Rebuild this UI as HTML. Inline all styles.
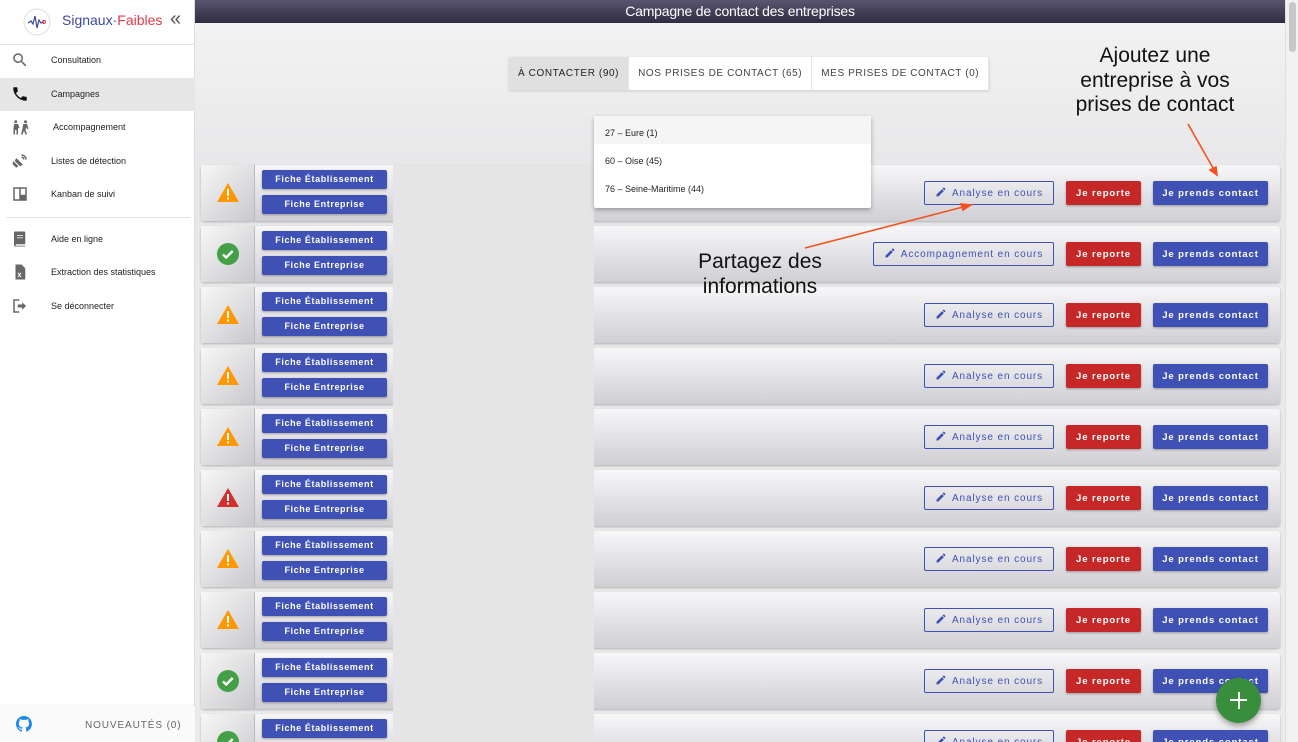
<!DOCTYPE html>
<html><head><meta charset="utf-8"><style>
*{box-sizing:border-box;margin:0;padding:0}
html,body{width:1298px;height:742px;overflow:hidden}
body{font-family:"Liberation Sans",Arial,sans-serif;background:#fff;position:relative}
#wrap{position:absolute;left:0;top:0;width:1298px;height:742px;overflow:hidden}
#side{position:absolute;left:0;top:0;width:195px;height:742px;background:#fff;border-right:1px solid #ddd}
.nav{position:absolute;left:0;width:195px;height:33px;font-size:9px;color:#222}
.nav span{position:absolute;left:51px;top:11px}
.nav svg{position:absolute;left:11px;top:7px}
#main{position:absolute;left:195px;top:0;width:1090px;height:742px;background:linear-gradient(180deg,#f4f4f4,#e8e8ea 160px,#ececec)}
#hdr{position:absolute;left:0;top:0;width:1090px;height:23px;background:linear-gradient(180deg,#5a5470,#2f2c40);color:#fff;font-size:14px;text-align:center;line-height:23px;letter-spacing:-.2px}
#scroll{position:absolute;left:1285px;top:0;width:13px;height:742px;background:#f1f1f1;border-left:1px solid #e0e0e0}
#scroll div{position:absolute;left:3px;top:2px;width:7px;height:50px;background:#c8c8c8;border-radius:4px}
.tabs{position:absolute;top:57px;left:509px;height:33px;display:flex;box-shadow:0 1px 3px rgba(0,0,0,.15);font-size:10px;letter-spacing:.6px;color:#444}
.tabs div{background:#fff;padding:0 9px;line-height:33px;border-right:1px solid #e6e6e6}
.tabs div.a{background:#e0e0e0;color:#222}
.row{position:absolute;left:201px;width:1079px;height:56px;border-radius:3px;background:linear-gradient(180deg,#f7f7f9,#cfcfd4);box-shadow:0 1px 2px rgba(0,0,0,.25)}
.ic{position:absolute;left:0;top:0;width:54px;height:56px;background:linear-gradient(135deg,#f7f7f7,#c9c9cd);border-right:1px solid #bbb}
.ic svg{position:absolute;left:15px;top:16px}
.fb{position:absolute;left:61px;width:125px;height:19px;background:#3f51b5;color:#fff;font-size:9px;font-weight:bold;letter-spacing:.6px;text-align:center;line-height:19px;border-radius:2px;box-shadow:0 1px 2px rgba(0,0,0,.3)}
.b{position:absolute;top:16px;height:24px;font-size:9.5px;letter-spacing:.9px;text-align:center;line-height:26px;border-radius:2px}
.an{border:1px solid #3f51b5;color:#3f51b5;background:transparent;line-height:24px;font-size:10px}
.an svg{vertical-align:-2px;margin-right:5px}
.rp{left:865px;width:75px;background:#c62828;color:#fff;font-weight:bold;box-shadow:0 1px 2px rgba(0,0,0,.3)}
.pc{left:952px;width:115px;background:#3f51b5;color:#fff;font-weight:bold;box-shadow:0 1px 2px rgba(0,0,0,.3)}
#gray{position:absolute;left:393px;top:165px;width:201px;height:577px;background:#e5e5e5}
#dd{position:absolute;left:594px;top:116px;width:277px;height:92px;background:#fff;box-shadow:0 2px 5px rgba(0,0,0,.3);border-radius:2px;font-size:9px;color:#222}
#dd div{height:28px;line-height:35px;padding-left:11px}
.note{position:absolute;font-size:21px;color:#111;text-align:center;line-height:24.5px}
</style></head><body><div id="wrap">
<div id="main"><div id="hdr">Campagne de contact des entreprises</div></div>
<div id="scroll"><div></div></div>

<div id="side">
 <svg style="position:absolute;left:23px;top:8px" width="28" height="28" viewBox="0 0 28 28"><circle cx="14" cy="14" r="13" fill="#fff" stroke="#ddd"/><path d="M5 15 L8 13 L10 16 L12 8 L14 20 L16 12 L18 15 L21 14" fill="none" stroke="#3b4aa0" stroke-width="1.2"/><circle cx="21" cy="14" r="1.5" fill="none" stroke="#e53947"/></svg>
 <div style="position:absolute;left:62px;top:12px;font-size:14px;color:#3b4aa0">Signaux·<span style="color:#e53947">Faibles</span></div>
 <div style="position:absolute;left:170px;top:8px;font-size:20px;color:#555;letter-spacing:-5px">«</div>
 <div style="position:absolute;left:0;top:44px;width:195px;border-top:1px solid #e2e2e2"></div>
 <div class="nav" style="top:44px"><svg width="18" height="18" viewBox="0 0 24 24"><path fill="#666" d="M15.5 14h-.8l-.3-.3A6.5 6.5 0 1 0 9.5 16c1.6 0 3.1-.6 4.2-1.6l.3.3v.8l5 5 1.5-1.5-5-5zm-6 0C7 14 5 12 5 9.5S7 5 9.5 5 14 7 14 9.5 12 14 9.5 14z"/></svg><span>Consultation</span></div>
 <div class="nav" style="top:78px;background:#e6e6e6"><svg width="18" height="18" viewBox="0 0 24 24"><path fill="#111" d="M6.6 10.8a15 15 0 0 0 6.6 6.6l2.2-2.2c.3-.3.7-.4 1-.2 1.1.4 2.3.6 3.6.6.6 0 1 .4 1 1V20c0 .6-.4 1-1 1A17 17 0 0 1 3 4c0-.6.4-1 1-1h3.5c.6 0 1 .4 1 1 0 1.2.2 2.4.6 3.6.1.3 0 .7-.2 1z"/></svg><span>Campagnes</span></div>
 <div class="nav" style="top:111px"><svg width="20" height="18" viewBox="0 0 24 24"><path fill="#666" d="M5 3a2 2 0 1 1 0 4 2 2 0 0 1 0-4zm13 0a2 2 0 1 1 0 4 2 2 0 0 1 0-4zM3 8h5l2 5-2 1v8H6v-6H4v6H2v-9zm12 0h5l2 6-2 1-1-3-1 4 2 6h-2l-2-5-2 5h-2l2-8z"/></svg><span style="left:53px">Accompagnement</span></div>
 <div class="nav" style="top:145px"><svg width="18" height="18" viewBox="0 0 24 24"><path fill="#666" d="M3 12l7 7-3 2-5-5zm4-4l9 9-4 2-7-7zM14 3a7 7 0 0 1 7 7h-2a5 5 0 0 0-5-5zm0 3a4 4 0 0 1 4 4h-2a2 2 0 0 0-2-2z"/></svg><span>Listes de détection</span></div>
 <div class="nav" style="top:178px"><svg width="18" height="18" viewBox="0 0 24 24"><path fill="#666" d="M3 3h18v18H3zm2 2v14h6V5zm8 0v8h6V5z"/></svg><span>Kanban de suivi</span></div>
 <div style="position:absolute;left:6px;top:217px;width:184px;border-top:1px solid #e2e2e2"></div>
 <div class="nav" style="top:223px"><svg width="18" height="18" viewBox="0 0 24 24"><path fill="#666" d="M5 2h13a1 1 0 0 1 1 1v16H7a1 1 0 0 0 0 2h12v1H6a2 2 0 0 1-2-2V4a2 2 0 0 1 1-2zm3 5v1h8V7zm0 3v1h8v-1z"/></svg><span>Aide en ligne</span></div>
 <div class="nav" style="top:256px"><svg width="18" height="18" viewBox="0 0 24 24"><path fill="#666" d="M6 2h8l5 5v15H6zm2.5 11l2 3-2 3h1.6l1.2-2 1.2 2h1.6l-2-3 2-3h-1.6l-1.2 2-1.2-2z"/></svg><span>Extraction des statistiques</span></div>
 <div class="nav" style="top:290px"><svg width="18" height="18" viewBox="0 0 24 24"><path fill="#666" d="M3 3h8v2H5v14h6v2H3zm12 4l5 5-5 5v-3H9v-4h6z"/></svg><span>Se déconnecter</span></div>
 <div style="position:absolute;left:0;top:706px;width:195px;height:36px;background:#fafafa;box-shadow:0 -1px 3px rgba(0,0,0,.06)">
  <svg style="position:absolute;left:16px;top:10px" width="16" height="16" viewBox="0 0 16 16"><path fill="#1e88e5" d="M8 0a8 8 0 0 0-2.5 15.6c.4 0 .5-.2.5-.4v-1.5c-2.2.5-2.7-1-2.7-1-.4-.9-.9-1.2-.9-1.2-.7-.5.1-.5.1-.5.8.1 1.2.8 1.2.8.7 1.3 1.9.9 2.3.7.1-.5.3-.9.5-1.1-1.8-.2-3.6-.9-3.6-4 0-.9.3-1.6.8-2.1-.1-.2-.4-1 .1-2.1 0 0 .7-.2 2.2.8a7.4 7.4 0 0 1 4 0c1.5-1 2.2-.8 2.2-.8.4 1.1.2 1.9.1 2.1.5.6.8 1.3.8 2.1 0 3.1-1.9 3.8-3.6 4 .3.3.6.8.6 1.5v2.2c0 .2.1.5.6.4A8 8 0 0 0 8 0z"/></svg>
  <div style="position:absolute;left:85px;top:14px;font-size:10px;letter-spacing:.9px;color:#666">NOUVEAUTÉS (0)</div>
 </div>
</div>

<div class="tabs"><div class="a">À CONTACTER (90)</div><div>NOS PRISES DE CONTACT (65)</div><div>MES PRISES DE CONTACT (0)</div></div>

<svg width="0" height="0" style="position:absolute"><defs>
<g id="w"><path d="M12 2 L23 21 H1 Z" /><rect x="11" y="8" width="2" height="7" fill="#fff"/><rect x="11" y="16.5" width="2" height="2" fill="#fff"/></g>
<g id="ok"><circle cx="12" cy="12" r="11" fill="#43a047"/><path d="M7 12.5l3.2 3 6.5-6.5" fill="none" stroke="#fff" stroke-width="2.4"/></g>
<path id="pen" d="M3 17.25V21h3.75L17.8 9.94l-3.75-3.75zM20.7 7.04a1 1 0 0 0 0-1.41l-2.34-2.34a1 1 0 0 0-1.41 0l-1.830 1.830 3.750 3.750z"/>
</defs></svg>

<div class="row" style="top:165px"><div class="ic"><svg width="24" height="24" viewBox="0 0 24 24"><use href="#w" fill="#ff9800"/></svg></div><div class="fb" style="top:5px">Fiche Établissement</div><div class="fb" style="top:30px">Fiche Entreprise</div><div class="b an" style="left:723px;width:130px"><svg width="12" height="12" viewBox="0 0 24 24" fill="#3f51b5"><use href="#pen"/></svg>Analyse en cours</div><div class="b rp">Je reporte</div><div class="b pc">Je prends contact</div></div>
<div class="row" style="top:226px"><div class="ic"><svg width="24" height="24" viewBox="0 0 24 24"><use href="#ok"/></svg></div><div class="fb" style="top:5px">Fiche Établissement</div><div class="fb" style="top:30px">Fiche Entreprise</div><div class="b an" style="left:672px;width:181px"><svg width="12" height="12" viewBox="0 0 24 24" fill="#3f51b5"><use href="#pen"/></svg>Accompagnement en cours</div><div class="b rp">Je reporte</div><div class="b pc">Je prends contact</div></div>
<div class="row" style="top:287px"><div class="ic"><svg width="24" height="24" viewBox="0 0 24 24"><use href="#w" fill="#ff9800"/></svg></div><div class="fb" style="top:5px">Fiche Établissement</div><div class="fb" style="top:30px">Fiche Entreprise</div><div class="b an" style="left:723px;width:130px"><svg width="12" height="12" viewBox="0 0 24 24" fill="#3f51b5"><use href="#pen"/></svg>Analyse en cours</div><div class="b rp">Je reporte</div><div class="b pc">Je prends contact</div></div>
<div class="row" style="top:348px"><div class="ic"><svg width="24" height="24" viewBox="0 0 24 24"><use href="#w" fill="#ff9800"/></svg></div><div class="fb" style="top:5px">Fiche Établissement</div><div class="fb" style="top:30px">Fiche Entreprise</div><div class="b an" style="left:723px;width:130px"><svg width="12" height="12" viewBox="0 0 24 24" fill="#3f51b5"><use href="#pen"/></svg>Analyse en cours</div><div class="b rp">Je reporte</div><div class="b pc">Je prends contact</div></div>
<div class="row" style="top:409px"><div class="ic"><svg width="24" height="24" viewBox="0 0 24 24"><use href="#w" fill="#ff9800"/></svg></div><div class="fb" style="top:5px">Fiche Établissement</div><div class="fb" style="top:30px">Fiche Entreprise</div><div class="b an" style="left:723px;width:130px"><svg width="12" height="12" viewBox="0 0 24 24" fill="#3f51b5"><use href="#pen"/></svg>Analyse en cours</div><div class="b rp">Je reporte</div><div class="b pc">Je prends contact</div></div>
<div class="row" style="top:470px"><div class="ic"><svg width="24" height="24" viewBox="0 0 24 24"><use href="#w" fill="#d32f2f"/></svg></div><div class="fb" style="top:5px">Fiche Établissement</div><div class="fb" style="top:30px">Fiche Entreprise</div><div class="b an" style="left:723px;width:130px"><svg width="12" height="12" viewBox="0 0 24 24" fill="#3f51b5"><use href="#pen"/></svg>Analyse en cours</div><div class="b rp">Je reporte</div><div class="b pc">Je prends contact</div></div>
<div class="row" style="top:531px"><div class="ic"><svg width="24" height="24" viewBox="0 0 24 24"><use href="#w" fill="#ff9800"/></svg></div><div class="fb" style="top:5px">Fiche Établissement</div><div class="fb" style="top:30px">Fiche Entreprise</div><div class="b an" style="left:723px;width:130px"><svg width="12" height="12" viewBox="0 0 24 24" fill="#3f51b5"><use href="#pen"/></svg>Analyse en cours</div><div class="b rp">Je reporte</div><div class="b pc">Je prends contact</div></div>
<div class="row" style="top:592px"><div class="ic"><svg width="24" height="24" viewBox="0 0 24 24"><use href="#w" fill="#ff9800"/></svg></div><div class="fb" style="top:5px">Fiche Établissement</div><div class="fb" style="top:30px">Fiche Entreprise</div><div class="b an" style="left:723px;width:130px"><svg width="12" height="12" viewBox="0 0 24 24" fill="#3f51b5"><use href="#pen"/></svg>Analyse en cours</div><div class="b rp">Je reporte</div><div class="b pc">Je prends contact</div></div>
<div class="row" style="top:653px"><div class="ic"><svg width="24" height="24" viewBox="0 0 24 24"><use href="#ok"/></svg></div><div class="fb" style="top:5px">Fiche Établissement</div><div class="fb" style="top:30px">Fiche Entreprise</div><div class="b an" style="left:723px;width:130px"><svg width="12" height="12" viewBox="0 0 24 24" fill="#3f51b5"><use href="#pen"/></svg>Analyse en cours</div><div class="b rp">Je reporte</div><div class="b pc">Je prends contact</div></div>
<div class="row" style="top:714px"><div class="ic"><svg width="24" height="24" viewBox="0 0 24 24"><use href="#ok"/></svg></div><div class="fb" style="top:5px">Fiche Établissement</div><div class="fb" style="top:30px">Fiche Entreprise</div><div class="b an" style="left:723px;width:130px"><svg width="12" height="12" viewBox="0 0 24 24" fill="#3f51b5"><use href="#pen"/></svg>Analyse en cours</div><div class="b rp">Je reporte</div><div class="b pc">Je prends contact</div></div>

<div id="gray"></div>
<div id="dd"><div style="background:#f5f5f5;line-height:35px">27 – Eure (1)</div><div>60 – Oise (45)</div><div>76 – Seine-Maritime (44)</div></div>

<div class="note" style="left:1055px;top:44px;width:200px">Ajoutez une<br>entreprise à vos<br>prises de contact</div>
<div class="note" style="left:660px;top:250px;width:200px">Partagez des<br>informations</div>
<svg style="position:absolute;left:0;top:0" width="1298" height="742"><g stroke="#f4511e" stroke-width="1.6" fill="#f4511e"><line x1="1188" y1="124" x2="1213" y2="168"/><path d="M1217 175l-7-5 6-3z"/><line x1="805" y1="248" x2="963" y2="207"/><path d="M971 205l-8 5-2-6z"/></g></svg>

<div style="position:absolute;left:1216px;top:678px;width:45px;height:45px;border-radius:50%;background:#388e3c;box-shadow:0 3px 6px rgba(0,0,0,.35)"><div style="position:absolute;left:14px;top:21px;width:17px;height:2px;background:#fff"></div><div style="position:absolute;left:21.5px;top:14px;width:2px;height:17px;background:#fff"></div></div>
</div></body></html>
